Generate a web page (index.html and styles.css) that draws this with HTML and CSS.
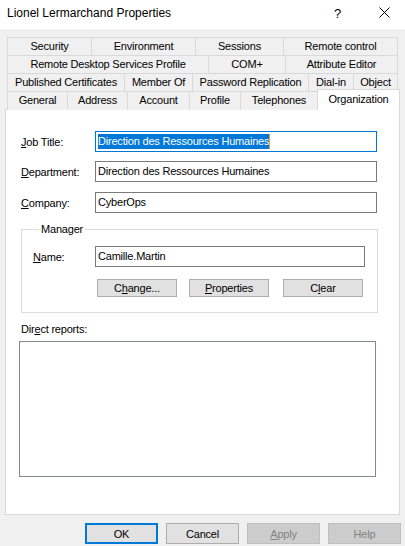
FILE: index.html
```html
<!DOCTYPE html>
<html>
<head>
<meta charset="utf-8">
<link rel="stylesheet" href="styles.css">
</head>
<body>
<div class="window">
  <div class="titlebar">
    <span class="title">Lionel Lermarchand Properties</span>
    <span class="help">?</span>
    <svg class="close" width="11" height="11" viewBox="0 0 11 11"><path d="M0.5 0.5 L10.5 10.5 M10.5 0.5 L0.5 10.5" stroke="#000" stroke-width="1" fill="none"/></svg>
  </div>

  <div class="tabs">
    <div class="row r1">
      <div class="tab">Security</div>
      <div class="tab">Environment</div>
      <div class="tab">Sessions</div>
      <div class="tab last">Remote control</div>
    </div>
    <div class="row r2">
      <div class="tab">Remote Desktop Services Profile</div>
      <div class="tab">COM+</div>
      <div class="tab last">Attribute Editor</div>
    </div>
    <div class="row r3">
      <div class="tab">Published Certificates</div>
      <div class="tab">Member Of</div>
      <div class="tab">Password Replication</div>
      <div class="tab">Dial-in</div>
      <div class="tab last">Object</div>
    </div>
    <div class="row r4">
      <div class="tab">General</div>
      <div class="tab">Address</div>
      <div class="tab">Account</div>
      <div class="tab">Profile</div>
      <div class="tab">Telephones</div>
      <div class="tab selected">Organization</div>
    </div>
  </div>

  <div class="panel">
    <div class="fields">
      <div class="field">
        <label class="lbl"><u>J</u>ob Title:</label>
        <div class="input focused"><span class="sel">Direction des Ressources Humaines</span><span class="caret"></span></div>
      </div>
      <div class="field">
        <label class="lbl"><u>D</u>epartment:</label>
        <div class="input">Direction des Ressources Humaines</div>
      </div>
      <div class="field company">
        <label class="lbl"><u>C</u>ompany:</label>
        <div class="input">CyberOps</div>
      </div>
    </div>

    <fieldset class="group">
      <legend>Manager</legend>
      <div class="field name">
        <label class="lbl name-lbl"><u>N</u>ame:</label>
        <div class="input name-input">Camille.Martin</div>
      </div>
      <div class="mgr-buttons">
        <div class="btn small">C<u>h</u>ange...</div>
        <div class="btn small"><u>P</u>roperties</div>
        <div class="btn small">C<u>l</u>ear</div>
      </div>
    </fieldset>

    <div class="reports-lbl">Dir<u>e</u>ct reports:</div>
    <div class="listbox"></div>
  </div>

  <div class="footer">
    <div class="btn big default">OK</div>
    <div class="btn big">Cancel</div>
    <div class="btn big disabled"><u>A</u>pply</div>
    <div class="btn big disabled">Help</div>
  </div>
</div>
</body>
</html>
```

FILE: styles.css
```css
* { box-sizing: border-box; }
html, body { margin: 0; padding: 0; }
body {
  width: 405px;
  height: 546px;
  overflow: hidden;
  background: #f0f0f0;
  font-family: "Liberation Sans", Arial, sans-serif;
  font-size: 11px;
  letter-spacing: -0.2px;
  color: #000;
}
.window { width: 405px; height: 546px; }

.titlebar {
  height: 29px;
  background: #fff;
  display: flex;
  align-items: center;
  padding-left: 7px;
  font-family: "Liberation Sans", Arial, sans-serif;
  font-size: 12px;
  letter-spacing: 0;
}
.title { flex: 1; margin-top: -3px; }
.help { width: 12px; margin-right: 33px; margin-top: -3px; font-size: 13px; }
.close { margin-right: 15px; margin-top: -4px; }

.tabs { margin-top: 8px; padding-left: 7px; }
.row { display: grid; height: 18px; }
.r1 { grid-template-columns: 84px 104px 88px 115px; }
.r2 { grid-template-columns: 201px 77px 113px; }
.r3 { grid-template-columns: 117px 68px 116px 45px 45px; }
.r4 { grid-template-columns: 60px 60px 62px 51px 77px 83px; }
.tab {
  border-top: 1px solid #d9d9d9;
  border-left: 1px solid #d9d9d9;
  background: #f0f0f0;
  text-align: center;
  line-height: 16px;
  white-space: nowrap;
}
.tab.last { border-right: 1px solid #d9d9d9; }
.tab.selected {
  position: relative;
  z-index: 1;
  margin-top: -2px;
  height: 21px;
  background: #fff;
  border-right: 1px solid #d9d9d9;
  line-height: 18px;
}

.panel {
  margin-left: 5px;
  width: 395px;
  height: 406px;
  background: #fff;
  border: 1px solid #d9d9d9;
  padding: 21px 0 0 14px;
}

.fields { display: flex; flex-direction: column; gap: 9px; }
.field { display: flex; align-items: center; height: 21px; }
.company { margin-top: 1px; }
.lbl { width: 75px; padding-left: 1px; }
.input {
  width: 282px;
  height: 21px;
  border: 1px solid #7a7a7a;
  padding-left: 2px;
  line-height: 19px;
  white-space: nowrap;
  overflow: hidden;
  display: flex;
  align-items: center;
}
.input.focused { border-color: #0078d7; }
.sel { background: #0078d7; color: #fff; line-height: 15px; }
.caret { width: 1px; height: 15px; background: #f7931e; }

.group {
  margin: 9px 0 0 1px;
  width: 357px;
  border: 1px solid #dcdcdc;
  padding: 10px 0 15px 11px;
}
.group legend {
  margin-left: 6px;
  padding: 0 2px;
  line-height: 14px;
}
.name-lbl { width: 62px; padding-left: 0; }
.name-input { width: 270px; }
.mgr-buttons {
  display: flex;
  margin-top: 12px;
  padding-left: 64px;
}
.btn {
  background: #e1e1e1;
  border: 1px solid #adadad;
  display: flex;
  align-items: center;
  justify-content: center;
}
.btn.small { width: 80px; height: 18px; }
.mgr-buttons .btn + .btn { margin-left: 12px; }
.mgr-buttons .btn:last-child { margin-left: 14px; }

.reports-lbl { margin-top: 9px; line-height: 14px; padding-left: 1px; }
.listbox {
  margin-top: 5px;
  margin-left: -1px;
  width: 357px;
  height: 136px;
  border: 1px solid #828790;
}

.footer {
  display: flex;
  justify-content: flex-end;
  gap: 8px;
  margin-top: 8px;
  padding-right: 4px;
}
.btn.big { width: 73px; height: 21px; }
.btn.default { border: 2px solid #0078d7; }
.btn.disabled { background: #cccccc; border-color: #bfbfbf; color: #838383; }
```
